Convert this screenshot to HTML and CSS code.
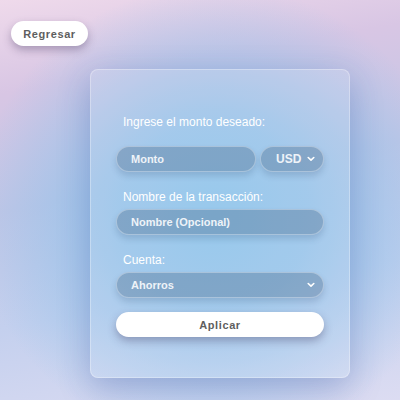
FILE: index.html
```html
<!DOCTYPE html>
<html lang="es">
<head>
<meta charset="utf-8">
<link rel="stylesheet" href="styles.css">
</head>
<body>
<div class="page">
  <button class="btn btn-back">Regresar</button>
  <div class="card">
    <label class="label label-first">Ingrese el monto deseado:</label>
    <div class="row">
      <div class="field field-amount">Monto</div>
      <div class="field select select-currency">
        <span>USD</span>
        <svg class="chev" width="8" height="6" viewBox="0 0 8 6"><path d="M1.2 1.5 L4 4.2 L6.8 1.5" fill="none" stroke="#fff" stroke-width="1.6" stroke-linecap="round" stroke-linejoin="round"/></svg>
      </div>
    </div>
    <label class="label">Nombre de la transacción:</label>
    <div class="field">Nombre (Opcional)</div>
    <label class="label">Cuenta:</label>
    <div class="field select">
      <span>Ahorros</span>
      <svg class="chev" width="8" height="6" viewBox="0 0 8 6"><path d="M1.2 1.5 L4 4.2 L6.8 1.5" fill="none" stroke="#fff" stroke-width="1.6" stroke-linecap="round" stroke-linejoin="round"/></svg>
    </div>
    <button class="btn btn-apply">Aplicar</button>
  </div>
</div>
</body>
</html>
```
FILE: styles.css
```css
html, body {
  margin: 0;
  padding: 0;
  height: 100%;
}
body {
  font-family: "Liberation Sans", Arial, sans-serif;
  background:
    radial-gradient(ellipse 240px 230px at 215px 215px, rgba(138,194,234,1) 0%, rgba(146,194,234,0.9) 40%, rgba(170,196,236,0) 100%),
    linear-gradient(170deg, #efdaeb 0%, #d8c6e4 20%, #c2c6e6 45%, #c4d0ee 70%, #dcdcf2 100%);
  overflow: hidden;
}
.page {
  position: relative;
  height: 400px;
  padding: 21px 0 0 11px;
  box-sizing: border-box;
}
.btn {
  display: block;
  border: none;
  background: #fff;
  border-radius: 13px;
  font-family: "Liberation Sans", Arial, sans-serif;
  font-weight: bold;
  font-size: 11px;
  letter-spacing: 0.6px;
  color: #5e5e5e;
  box-shadow: 0 4px 8px rgba(60, 50, 90, 0.35);
  padding: 0;
  cursor: pointer;
}
.btn-back {
  width: 77px;
  height: 25px;
}
.card {
  width: 260px;
  height: 309px;
  margin: 23px 0 0 79px;
  box-sizing: border-box;
  padding: 45px 25px 0 25px;
  border-radius: 8px;
  background: rgba(255, 255, 255, 0.12);
  border: 1px solid rgba(255, 255, 255, 0.3);
  box-shadow: 0 10px 32px rgba(40, 50, 140, 0.25);
  display: flex;
  flex-direction: column;
}
.label {
  display: block;
  color: #fff;
  font-size: 12px;
  line-height: 14px;
  padding-left: 7px;
  margin-bottom: 5px;
}
.label-first {
  margin-bottom: 17px;
}
.row {
  display: flex;
  gap: 4px;
  margin-bottom: 18px;
}
.field {
  height: 26px;
  box-sizing: border-box;
  border-radius: 13px;
  background: rgba(40, 70, 105, 0.27);
  border: 1px solid rgba(255, 255, 255, 0.32);
  box-shadow: 0 4px 6px rgba(40, 60, 100, 0.18);
  color: #eef3f8;
  font-weight: bold;
  font-size: 11px;
  display: flex;
  align-items: center;
  padding-left: 14px;
  margin-bottom: 18px;
}
.row .field {
  margin-bottom: 0;
}
.field-amount {
  flex: 1;
}
.select {
  justify-content: space-between;
  padding-right: 8px;
}
.select-currency {
  width: 64px;
  flex: none;
  padding-left: 15px;
  font-size: 12px;
}
.chev {
  display: block;
}
.card > .select {
  margin-bottom: 14px;
}
.btn-apply {
  width: 208px;
  height: 25px;
  border-radius: 13px;
}
```
